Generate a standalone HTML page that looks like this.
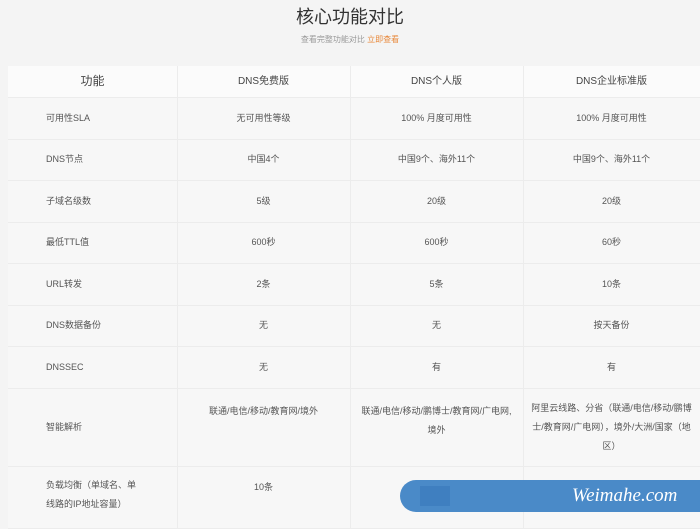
<!DOCTYPE html><html><head><meta charset="utf-8"><style>
body{margin:0;width:700px;height:528px;background:#f4f4f4;font-family:"Liberation Sans","Noto Sans CJK SC",sans-serif;color:#444;overflow:hidden;position:relative}
.a{position:absolute}
.t{left:0;width:700px;text-align:center}
.c{position:absolute;display:flex;align-items:center;justify-content:center;text-align:center;font-size:9px;line-height:19px;color:#555;box-sizing:border-box;padding:0 10px}
.l{justify-content:flex-start;padding-left:38px;text-align:left}
</style></head><body>
<div class="a t" style="top:3px;font-size:18px;color:#333">核心功能对比</div>
<div class="a t" style="top:34px;font-size:8px;color:#999">查看完整功能对比 <span style="color:#e8883a">立即查看</span></div>
<div class="a" style="left:8px;top:66px;width:692px;height:462px;background:#f7f7f7"></div>
<div class="a" style="left:8px;top:66px;width:692px;height:31px;background:#fbfbfb"></div>
<div class="a" style="left:177px;top:66px;width:1px;height:462px;background:#ececec"></div>
<div class="a" style="left:350px;top:66px;width:1px;height:462px;background:#ececec"></div>
<div class="a" style="left:523px;top:66px;width:1px;height:462px;background:#ececec"></div>
<div id="rows"></div>
<script>
var R=[[66,97,["功能","DNS免费版","DNS个人版","DNS企业标准版"],1],
[97,139,["可用性SLA","无可用性等级","100% 月度可用性","100% 月度可用性"]],
[139,180,["DNS节点","中国4个","中国9个、海外11个","中国9个、海外11个"]],
[180,222,["子域名级数","5级","20级","20级"]],
[222,263,["最低TTL值","600秒","600秒","60秒"]],
[263,305,["URL转发","2条","5条","10条"]],
[305,346,["DNS数据备份","无","无","按天备份"]],
[346,388,["DNSSEC","无","有","有"]],
[388,466,["智能解析","联通/电信/移动/教育网/境外","联通/电信/移动/鹏博士/教育网/广电网,<br>境外","阿里云线路、分省（联通/电信/移动/鹏博士/教育网/广电网），境外/大洲/国家（地区）"]],
[466,528,["负载均衡（单域名、单<br>线路的IP地址容量）","10条","",""]]];
var X=[8,177,350,523,700],h="";
R.forEach(function(r,i){
 h+='<div class="a" style="left:8px;top:'+r[1]+'px;width:692px;height:1px;background:#ececec"></div>';
 for(var j=0;j<4;j++){
  var st='left:'+X[j]+'px;top:'+r[0]+'px;width:'+(X[j+1]-X[j])+'px;height:'+(r[1]-r[0])+'px;';
  if(r[3])st+='font-size:'+(j==0?12:10)+'px;color:#444;';
  if(j==3)st+='padding:0 6px;';
  if(i==8&&j==1)st+='align-items:flex-start;padding-top:14px;';
  if(i==8&&j==2)st+='align-items:flex-start;padding-top:14px;';
  if(i==9&&j==1)st+='align-items:flex-start;padding-top:12px;';
  if(i==9&&j==0)st+='align-items:flex-start;padding-top:10px;';
  h+='<div class="c'+(j==0&&!r[3]?' l':'')+'" style="'+st+'">'+r[2][j]+'</div>';
 }
});
document.getElementById('rows').innerHTML=h;
</script>
<div class="a" style="left:400px;top:480px;width:300px;height:32px;background:#4a8ac8;border-radius:16px 0 0 16px"></div>
<div class="a" style="left:420px;top:486px;width:30px;height:20px;background:#3f7fc0"></div>
<div class="a" style="left:572px;top:485px;font-family:'Liberation Serif',serif;font-style:italic;font-size:19px;color:#fff">Weimahe.com</div>
</body></html>
